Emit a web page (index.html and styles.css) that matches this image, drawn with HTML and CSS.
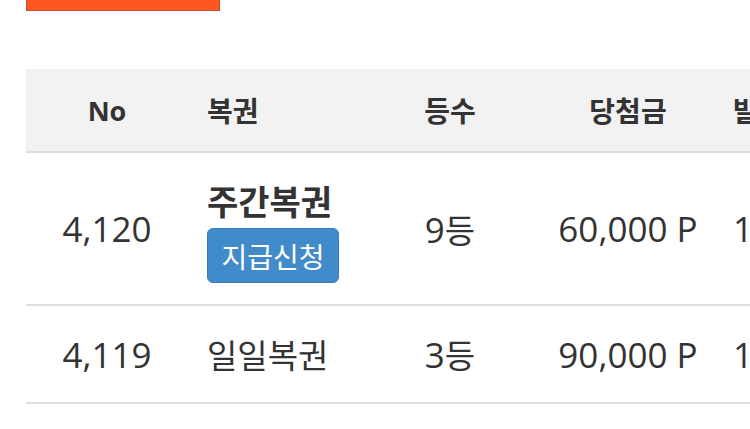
FILE: index.html
```html
<!DOCTYPE html>
<html lang="ko">
<head>
<meta charset="utf-8">
<title>당첨 내역</title>
<link rel="stylesheet" href="styles.css">
</head>
<body>
<div class="page">
  <div class="top-btn"></div>
  <table class="prize">
    <colgroup>
      <col class="c-no"><col class="c-kind"><col class="c-rank"><col class="c-amt"><col class="c-date">
    </colgroup>
    <thead>
      <tr>
        <th class="center">No</th>
        <th class="left"><span class="ko">복권</span></th>
        <th class="center"><span class="ko">등수</span></th>
        <th class="center"><span class="ko">당첨금</span></th>
        <th class="left pad-date"><span class="ko">발행일</span></th>
      </tr>
    </thead>
    <tbody>
      <tr class="row-tall">
        <td class="center">4,120</td>
        <td class="left kind">
          <div class="kind-title ko">주간복권</div>
          <button class="pay-btn ko" type="button">지급신청</button>
        </td>
        <td class="center">9<span class="ko">등</span></td>
        <td class="center">60,000 P</td>
        <td class="left pad-date">19.05.13</td>
      </tr>
      <tr class="row-short">
        <td class="center">4,119</td>
        <td class="left"><span class="ko">일일복권</span></td>
        <td class="center">3<span class="ko">등</span></td>
        <td class="center">90,000 P</td>
        <td class="left pad-date">19.05.12</td>
      </tr>
    </tbody>
  </table>
</div>
</body>
</html>
```

FILE: styles.css
```css
html, body {
  margin: 0;
  padding: 0;
  background: #ffffff;
}

.page {
  width: 750px;
  height: 429px;
  overflow: hidden;
  padding-left: 26px;
  box-sizing: border-box;
  font-family: "Open Sans", "Noto Sans CJK KR", sans-serif;
  color: #333333;
}

.top-btn {
  width: 194px;
  height: 11px;
  box-sizing: border-box;
  background: #ff5722;
  border: 1px solid #c0512d;
  border-top: none;
}

.prize {
  margin-top: 58px;
  width: 902px;
  table-layout: fixed;
  border-collapse: separate;
  border-spacing: 0;
}

.c-no { width: 162px; }
.c-kind { width: 184px; }
.c-rank { width: 156px; }
.c-amt { width: 200px; }
.c-date { width: 200px; }

.ko {
  font-family: "Noto Sans CJK KR", sans-serif;
}

.prize th {
  box-sizing: border-box;
  height: 84px;
  padding: 0;
  background: #f2f2f2;
  border-bottom: 2px solid #dddddd;
  font-size: 27px;
  font-weight: 700;
  color: #333333;
  vertical-align: middle;
}

.prize th .ko {
  font-size: 28px;
}

.prize td {
  box-sizing: border-box;
  padding: 0;
  border-bottom: 2px solid #dddddd;
  font-size: 35px;
  vertical-align: middle;
  white-space: nowrap;
}

.prize td .ko {
  font-size: 33px;
}

.row-tall td { height: 153px; }
.row-short td { height: 98px; }

.center { text-align: center; }
.left { text-align: left; padding-left: 19px !important; }
.pad-date { padding-left: 5px !important; }

.kind {
  padding-top: 7px !important;
}

.prize td .kind-title {
  font-size: 34px;
  font-weight: 700;
  line-height: 40px;
}

.prize td .pay-btn {
  display: inline-block;
  margin-top: 7px;
  height: 55px;
  width: 132px;
  padding: 0;
  box-sizing: border-box;
  background: #428bca;
  border: 1px solid #357ebd;
  border-radius: 6px;
  color: #ffffff;
  font-size: 28px;
  line-height: 52px;
  text-align: center;
  cursor: pointer;
}
```
